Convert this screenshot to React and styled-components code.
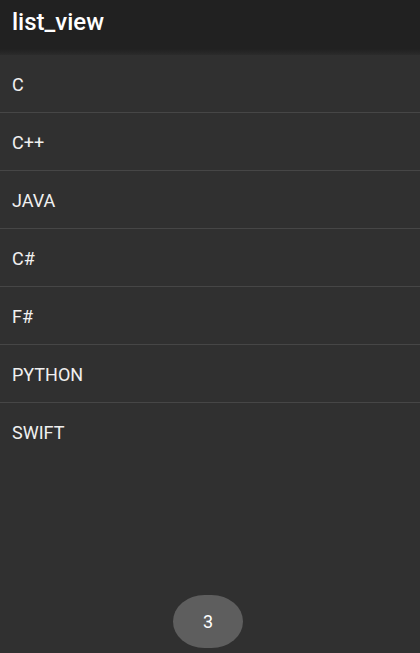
import React from 'react';
import styled, {createGlobalStyle} from 'styled-components';

const GlobalStyle = createGlobalStyle`
    html, body {
        margin: 0;
        padding: 0;
        background: #303030;
        font-family: Roboto, "Noto Sans", "Liberation Sans", sans-serif;
    }
`;

const Screen = styled.div`
    position: relative;
    display: flex;
    flex-direction: column;
    width: 420px;
    height: 653px;
    overflow: hidden;
    background: #303030;
    color: #f5f5f5;
`;

const ActionBar = styled.header`
    display: flex;
    align-items: flex-start;
    height: 55px;
    box-sizing: border-box;
    padding: 8px 12px 0;
    background: linear-gradient(to bottom, #212121 0, #212121 49px, #2b2b2b 55px);
`;

const Title = styled.h1`
    margin: 0;
    font-size: 24px;
    line-height: 28px;
    font-weight: 500;
    color: #ffffff;
`;

const List = styled.ul`
    display: flex;
    flex-direction: column;
    margin: 0;
    padding: 0;
    list-style: none;
`;

const Item = styled.li`
    display: flex;
    align-items: center;
    box-sizing: border-box;
    height: 58px;
    padding: 1px 12px 0;
    font-size: 18px;
    color: #f0f0f0;
    border-bottom: ${props => (props.last ? 'none' : '1px solid #464646')};
`;

// toast sits over the list, so it's the one absolute thing
const Toast = styled.div`
    position: absolute;
    left: 173px;
    bottom: 5px;
    width: 70px;
    height: 53px;
    display: flex;
    align-items: center;
    justify-content: center;
    border-radius: 32px / 27px;
    background: #5e5e5e;
    color: #ffffff;
    font-size: 18px;
`;

const languages = ['C', 'C++', 'JAVA', 'C#', 'F#', 'PYTHON', 'SWIFT'];

export default function App() {
    return (
        <Screen>
            <GlobalStyle/>
            <ActionBar>
                <Title>list_view</Title>
            </ActionBar>
            <List>
                {languages.map((name, i) => (
                    <Item key={name} last={i === languages.length - 1}>{name}</Item>
                ))}
            </List>
            <Toast>3</Toast>
        </Screen>
    );
}
